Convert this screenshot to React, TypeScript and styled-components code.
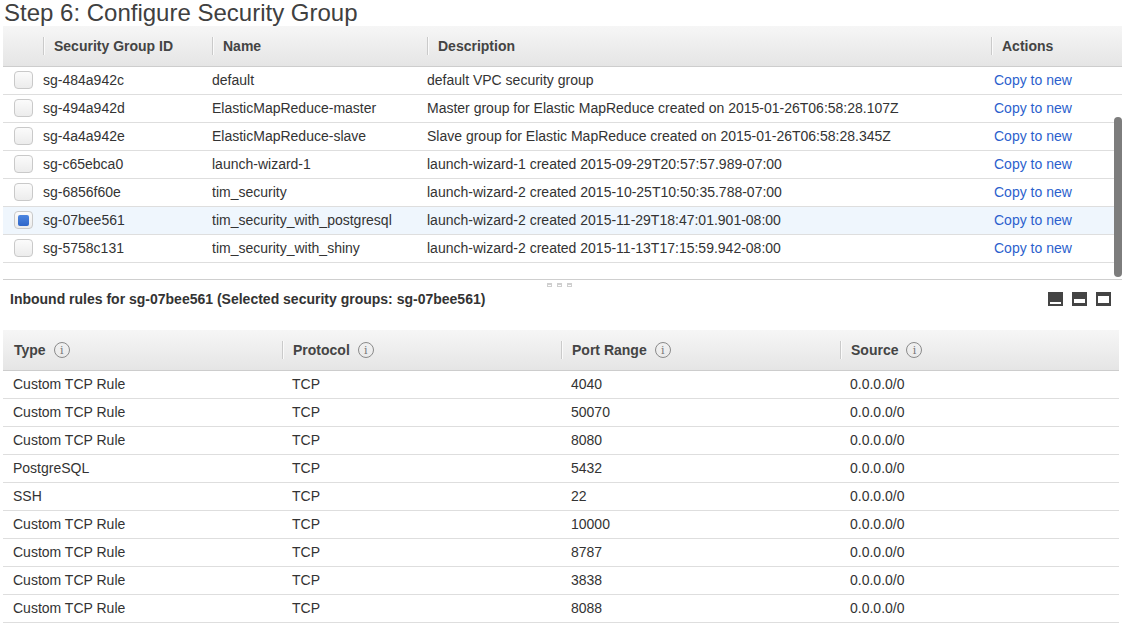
import React from "react";
import styled, { createGlobalStyle } from "styled-components";

const GlobalStyle = createGlobalStyle`
  html, body { margin: 0; padding: 0; background: #fff; }
  body {
    font-family: "Liberation Sans", Arial, Helvetica, sans-serif;
    color: #333;
    -webkit-font-smoothing: antialiased;
  }
`;

const Page = styled.div`
  width: 1125px;
  height: 625px;
  overflow: hidden;
  padding: 0 3px;
  box-sizing: border-box;
`;

const Title = styled.h1`
  margin: 0 0 0 1px;
  font-size: 24px;
  line-height: 26px;
  font-weight: normal;
  color: #404040;
  white-space: nowrap;
`;

const GroupPane = styled.div`
  position: relative;
  height: 253px;
  border-bottom: 1px solid #cfcfcf;
  overflow: hidden;
`;

const GroupGrid = styled.div`
  display: grid;
  grid-template-columns: 40px 169px 215px 564px 131px;
  width: 1119px;
`;

const HeadCell = styled.div<{ $sep?: boolean }>`
  position: relative;
  height: 40px;
  display: flex;
  align-items: center;
  padding-left: 11px;
  background: linear-gradient(#f6f6f6, #e5e5e5);
  border-bottom: 1px solid #cdcdcd;
  font-weight: bold;
  font-size: 14px;
  color: #444;
  white-space: nowrap;
  &::before {
    content: "";
    display: ${(p) => (p.$sep ? "block" : "none")};
    position: absolute;
    left: 0;
    top: 11px;
    height: 18px;
    width: 1px;
    background: #cacaca;
    box-shadow: 1px 0 0 #fafafa;
  }
`;

const Cell = styled.div<{ $pad?: number; $selected?: boolean; $link?: boolean }>`
  height: 27px;
  display: flex;
  align-items: center;
  padding-left: ${(p) => p.$pad ?? 0}px;
  padding-bottom: 1px;
  box-sizing: border-box;
  height: 28px;
  border-bottom: 1px solid #dedede;
  background: ${(p) => (p.$selected ? "#eff6fd" : "#fff")};
  font-size: 14px;
  color: ${(p) => (p.$link ? "#2c5fcd" : "#333")};
  white-space: nowrap;
  overflow: hidden;
`;

const Check = styled.span<{ $on?: boolean }>`
  width: 17px;
  height: 16px;
  border: 1px solid #c9c9c9;
  border-radius: 4px;
  background: linear-gradient(#fbfbfb, #ececec);
  display: flex;
  align-items: center;
  justify-content: center;
  box-sizing: content-box;
  &::after {
    content: "";
    display: ${(p) => (p.$on ? "block" : "none")};
    width: 11px;
    height: 11px;
    border-radius: 2px;
    background: linear-gradient(#4d86e0, #2f66c9);
  }
`;

const Thumb = styled.div`
  position: absolute;
  right: 0;
  top: 91px;
  width: 8px;
  height: 160px;
  border-radius: 4px;
  background: #7d7d7d;
`;

const Splitter = styled.div`
  height: 8px;
  display: flex;
  justify-content: center;
  gap: 5px;
  padding-top: 3px;
  padding-right: 6px;
  box-sizing: border-box;
`;

const Dot = styled.span`
  width: 5px;
  height: 4px;
  border: 1px solid #cfcfcf;
  border-top-width: 2px;
  box-sizing: border-box;
`;

const RulesBar = styled.div`
  height: 22px;
  display: flex;
  align-items: center;
  justify-content: space-between;
  padding: 0 11px 0 7px;
  margin-bottom: 20px;
`;

const RulesLabel = styled.div`
  font-weight: bold;
  font-size: 14px;
  color: #333;
  white-space: nowrap;
`;

const SizeIcons = styled.div`
  display: flex;
  gap: 9px;
`;

const RulesGrid = styled.div`
  display: grid;
  grid-template-columns: repeat(4, 279px);
  width: 1116px;
`;

const HeadLabel = styled.span`
  display: flex;
  align-items: center;
  gap: 8px;
`;

const Info = styled.span`
  width: 14px;
  height: 14px;
  border: 1px solid #8a8a8a;
  border-radius: 50%;
  display: flex;
  align-items: center;
  justify-content: center;
  font-size: 11px;
  font-weight: normal;
  color: #777;
  font-family: "DejaVu Serif", "Liberation Serif", serif;
  line-height: 1;
`;

const groups = [
  ["sg-484a942c", "default", "default VPC security group"],
  ["sg-494a942d", "ElasticMapReduce-master", "Master group for Elastic MapReduce created on 2015-01-26T06:58:28.107Z"],
  ["sg-4a4a942e", "ElasticMapReduce-slave", "Slave group for Elastic MapReduce created on 2015-01-26T06:58:28.345Z"],
  ["sg-c65ebca0", "launch-wizard-1", "launch-wizard-1 created 2015-09-29T20:57:57.989-07:00"],
  ["sg-6856f60e", "tim_security", "launch-wizard-2 created 2015-10-25T10:50:35.788-07:00"],
  ["sg-07bee561", "tim_security_with_postgresql", "launch-wizard-2 created 2015-11-29T18:47:01.901-08:00"],
  ["sg-5758c131", "tim_security_with_shiny", "launch-wizard-2 created 2015-11-13T17:15:59.942-08:00"],
];

const rules = [
  ["Custom TCP Rule", "4040"],
  ["Custom TCP Rule", "50070"],
  ["Custom TCP Rule", "8080"],
  ["PostgreSQL", "5432"],
  ["SSH", "22"],
  ["Custom TCP Rule", "10000"],
  ["Custom TCP Rule", "8787"],
  ["Custom TCP Rule", "3838"],
  ["Custom TCP Rule", "8088"],
];

const SizeIcon = ({ top, h }: { top: number; h: number }) => (
  <svg width="15" height="14" viewBox="0 0 15 14">
    <rect x="0" y="0" width="15" height="14" fill="#444" />
    <rect x="2" y={top} width="11" height={h} fill="#fff" />
  </svg>
);

export default function App() {
  return (
    <>
      <GlobalStyle />
      <Page>
        <Title>Step 6: Configure Security Group</Title>
        <GroupPane>
          <GroupGrid>
            <HeadCell />
            <HeadCell $sep>Security Group ID</HeadCell>
            <HeadCell $sep>Name</HeadCell>
            <HeadCell $sep>Description</HeadCell>
            <HeadCell $sep>Actions</HeadCell>
            {groups.map(([id, name, desc]) => {
              const sel = id === "sg-07bee561";
              return (
                <React.Fragment key={id}>
                  <Cell $pad={11} $selected={sel}>
                    <Check $on={sel} />
                  </Cell>
                  <Cell $selected={sel}>{id}</Cell>
                  <Cell $selected={sel}>{name}</Cell>
                  <Cell $selected={sel}>{desc}</Cell>
                  <Cell $pad={3} $selected={sel} $link>
                    Copy to new
                  </Cell>
                </React.Fragment>
              );
            })}
          </GroupGrid>
          <Thumb />
        </GroupPane>
        <Splitter>
          <Dot />
          <Dot />
          <Dot />
        </Splitter>
        <RulesBar>
          <RulesLabel>Inbound rules for sg-07bee561 (Selected security groups: sg-07bee561)</RulesLabel>
          <SizeIcons>
            <SizeIcon top={10} h={2} />
            <SizeIcon top={7} h={4} />
            <SizeIcon top={4} h={7} />
          </SizeIcons>
        </RulesBar>
        <RulesGrid>
          {["Type", "Protocol", "Port Range", "Source"].map((h, i) => (
            <HeadCell key={h} $sep={i > 0}>
              <HeadLabel>
                {h}
                <Info>i</Info>
              </HeadLabel>
            </HeadCell>
          ))}
          {rules.map(([type, port], i) => (
            <React.Fragment key={i}>
              <Cell $pad={10}>{type}</Cell>
              <Cell $pad={10}>TCP</Cell>
              <Cell $pad={10}>{port}</Cell>
              <Cell $pad={10}>0.0.0.0/0</Cell>
            </React.Fragment>
          ))}
        </RulesGrid>
      </Page>
    </>
  );
}
